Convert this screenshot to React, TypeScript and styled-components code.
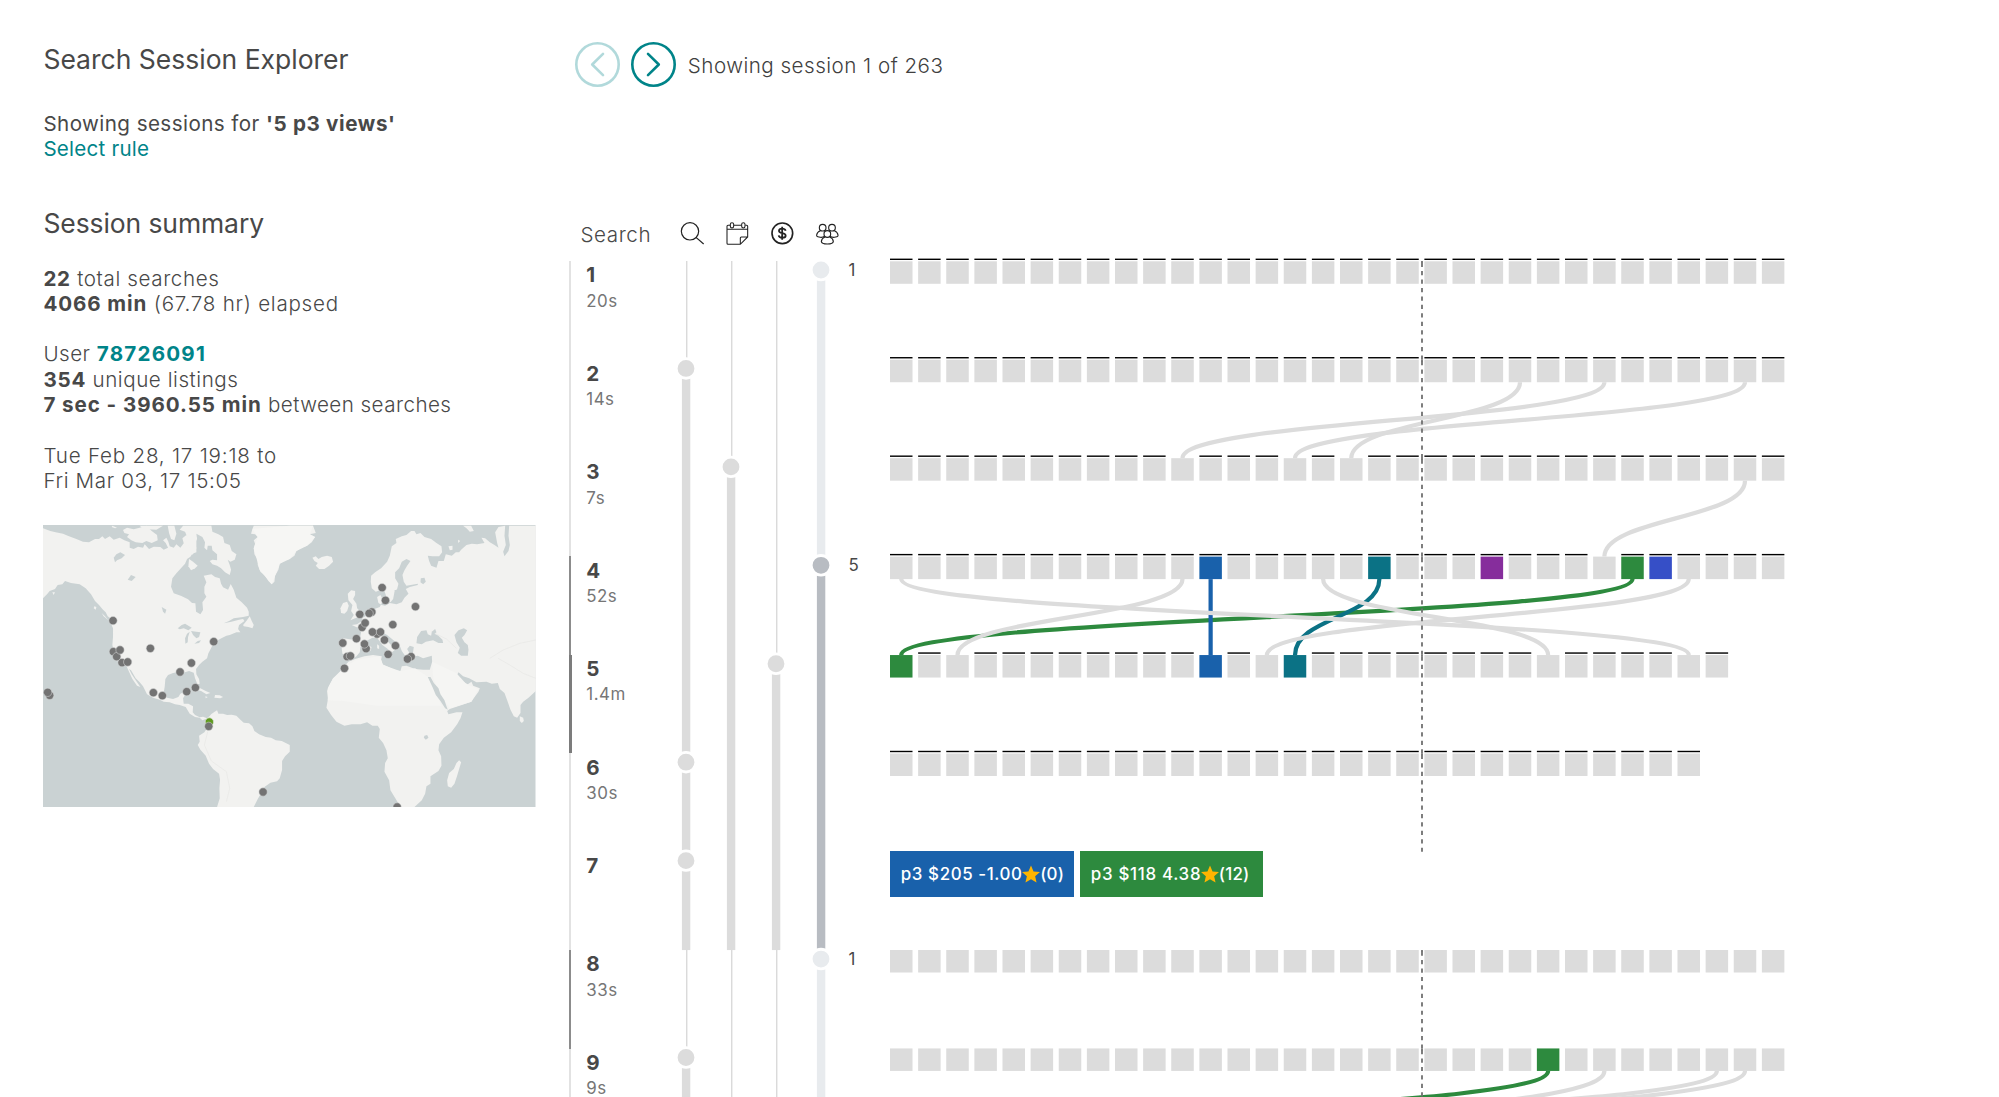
import React from 'react';
import styled, { createGlobalStyle } from 'styled-components';

const UNIT = 1.40625;
const ROW = 70 * UNIT;
const CELL = 16 * UNIT;
const STEP = 20 * UNIT;
const GREY = '#dcdcdc';
const TEAL = '#008489';
const BLUE = '#1961ab';
const GREEN = '#2d8a3e';
const CYAN = '#0b7285';
const PURPLE = '#862d9c';
const INDIGO = '#364fc7';

const GlobalStyle = createGlobalStyle`
  body {
    margin: 0;
    background: #fff;
    color: #484848;
    font-family: Inter, 'Liberation Sans', sans-serif;
  }
`;

const Page = styled.div`
  display: grid;
  grid-template-columns: 569px 1fr;
  height: 1097px;
  overflow: hidden;
`;

const Sidebar = styled.aside`
  padding: 42.6px 0 0 43.4px;
`;

const Heading = styled.h1<{ $spacing?: number }>`
  margin: 0;
  font-size: 26.5px;
  font-weight: 400;
  line-height: 32px;
  letter-spacing: ${(p) => p.$spacing ?? 0}px;
`;

const Block = styled.div<{ $top: number }>`
  margin-top: ${(p) => p.$top}px;
  font-size: 20.6px;
  line-height: 25.3125px;
  white-space: pre;
`;

const Line = styled.div`
  height: 25.3125px;
`;

const Text = styled.span<{ $spacing: number; $light?: boolean }>`
  font-weight: ${(p) => (p.$light ? 340 : 400)};
  letter-spacing: ${(p) => p.$spacing}px;
`;

const Strong = styled.strong<{ $spacing: number; $accent?: boolean }>`
  font-weight: 700;
  letter-spacing: ${(p) => p.$spacing}px;
  color: ${(p) => (p.$accent ? TEAL : 'inherit')};
`;

const RuleLink = styled.a`
  color: ${TEAL};
  letter-spacing: 0.22px;
`;

const MapFrame = styled.svg`
  display: block;
  width: 492.5px;
  height: 282px;
  margin-top: 32px;
`;

const Main = styled.main`
  display: flex;
  flex-direction: column;
  padding-top: 42px;
  min-width: 0;
`;

const Nav = styled.nav`
  display: flex;
  align-items: center;
  height: 45px;
  padding-left: 6px;
`;

const RoundButton = styled.button<{ $faded?: boolean }>`
  display: block;
  width: 45px;
  height: 45px;
  margin-right: 11.4px;
  padding: 0;
  border: 0;
  background: none;
  color: ${TEAL};
  opacity: ${(p) => (p.$faded ? 0.3 : 1)};
`;

const NavText = styled.span`
  padding-top: 2px;
  color: #404040;
  font-size: 20.6px;
  font-weight: 340;
  letter-spacing: 0.48px;
`;

const Header = styled.div`
  display: flex;
  gap: 20px;
  height: 25px;
  margin-top: 134px;
  padding-left: 11.4px;
`;

const HeaderLabel = styled.span`
  width: 80px;
  font-size: 20.6px;
  font-weight: 340;
  line-height: 28px;
  letter-spacing: 0.6px;
`;

const HeaderIcon = styled.svg`
  width: 25px;
  height: 25px;
  flex: none;
  fill: none;
  stroke: #222;
`;

const Body = styled.div`
  display: flex;
  margin-top: 12px;
`;

const SearchList = styled.div`
  width: 103px;
  padding-top: 3px;
`;

const SearchRow = styled.div<{ $bar: number; $color: string }>`
  box-sizing: border-box;
  height: ${ROW}px;
  padding: 1.4px 0 0 17.3px;
  background: linear-gradient(${(p) => p.$color}, ${(p) => p.$color}) no-repeat 0 0 / ${(p) => p.$bar}px 100%;
`;

const SearchNumber = styled.div`
  font-size: 20.6px;
  font-weight: 700;
  line-height: 25.3px;
`;

const SearchTime = styled.div`
  color: #767676;
  font-size: 16.9px;
  line-height: 26px;
  letter-spacing: 0.5px;
`;

const Tracks = styled.svg`
  width: 165px;
  height: 840px;
  flex: none;
`;

const GroupList = styled.div`
  width: 41.4px;
  padding: 2.6px 0 0 11.6px;
`;

const GroupCount = styled.div<{ $rows: number }>`
  height: ${(p) => p.$rows * ROW}px;
  font-size: 16.9px;
  line-height: 18px;
`;

const Chart = styled.div`
  display: flex;
  flex-direction: column;
`;

const Plot = styled.svg<{ $height: number; $top?: number }>`
  display: block;
  width: 920px;
  height: ${(p) => p.$height}px;
  margin-top: ${(p) => p.$top ?? 0}px;
  overflow: visible;
`;

const TagRow = styled.div`
  display: flex;
  gap: 6px;
  height: 46px;
`;

const Tag = styled.div<{ $bg: string; $width: number; $spacing: number }>`
  box-sizing: border-box;
  display: flex;
  align-items: center;
  width: ${(p) => p.$width}px;
  height: 46px;
  padding-left: 10.8px;
  background: ${(p) => p.$bg};
  color: #fff;
  font-size: 16.9px;
  font-weight: 500;
  letter-spacing: ${(p) => p.$spacing}px;
  white-space: pre;
`;

const StarIcon = styled.svg`
  width: 18px;
  height: 18px;
  margin-left: -0.4px;
  fill: #ffb400;
`;

const Reviews = styled.span`
  letter-spacing: 0.2px;
`;

const poly = (points: string) => {
  const p = points.trim().split(/\s+/);
  return `M${p.join('L')}Z`;
};

const AMERICAS = [
  '40,40 62,48 78,52 100,56 116,63 140,72 160,80 178,82 196,72 208,72 218,64 226,72 240,64 252,74 270,68 284,76 300,82 300,98 312,102 325,95 340,98 345,88 358,102 372,95 392,96 402,104 415,98 408,84 400,76 410,68 416,80 420,94 432,98 440,88 452,98 462,85 458,70 470,60 478,70 500,66 500,112 488,116 482,125 472,132 466,146 455,158 440,175 428,190 424,215 432,235 455,243 475,253 487,264 497,265 499,290 512,298 520,285 518,262 530,245 524,235 524,215 530,202 522,182 545,178 556,186 570,190 574,206 580,217 595,224 603,207 612,224 620,248 636,262 652,278 657,290 657,302 640,306 612,310 598,318 582,325 605,320 628,314 640,312 644,318 628,330 625,342 632,352 620,352 600,360 590,362 575,370 560,378 550,386 544,400 536,415 532,430 518,440 508,450 499,462 500,478 508,492 510,506 503,508 496,490 492,473 478,468 458,474 448,470 430,474 415,480 407,492 405,515 402,532 412,548 430,552 446,546 452,536 464,530 466,540 460,550 462,566 476,566 490,574 489,592 496,600 510,607 520,605 532,610 540,603 545,597 555,590 562,586 566,596 580,596 592,600 606,599 620,602 632,614 642,623 658,625 668,634 674,648 688,658 708,666 724,668 738,676 756,678 780,690 780,710 766,724 757,738 757,765 750,790 742,799 722,803 705,815 696,832 684,852 672,876 562,876 570,850 569,820 571,794 568,776 550,762 538,746 528,722 512,704 504,690 510,680 508,662 524,652 532,640 536,622 528,612 518,616 510,608 496,606 480,596 468,576 450,570 436,568 420,562 402,560 390,554 370,548 352,538 340,514 330,502 318,490 304,466 298,462 306,478 318,496 332,516 322,512 308,492 298,470 290,452 275,444 264,430 252,408 248,390 250,365 250,340 244,326 248,314 234,304 228,292 220,284 208,270 196,258 184,238 168,220 150,208 124,204 106,198 98,208 84,210 76,222 60,228 52,238 40,250',
  '248,32 262,38 256,40 246,36',
  '280,45 292,38 312,43 330,38 350,32 366,48 382,60 384,76 366,84 350,78 338,84 318,82 305,76 292,66 298,58 284,54',
  '330,32 400,32 380,44 340,42',
  '414,32 434,32 440,56 434,76 424,72 418,54',
  '460,32 545,32 548,50 566,58 580,66 584,84 600,90 606,108 620,118 615,134 602,140 594,134 600,150 604,164 600,180 586,172 574,160 562,152 548,148 540,138 548,134 562,136 562,118 548,106 546,92 534,92 532,106 524,98 526,82 518,66 500,56 502,72 496,84 500,100 488,120 482,100 470,84 474,70 466,50 450,44',
  '478,132 490,140 504,152 496,160 484,166 476,154',
  '672,32 668,42 664,56 676,58 684,66 672,76 676,86 672,100 674,118 684,134 684,150 692,170 706,182 716,198 726,208 734,200 736,182 746,164 750,146 766,136 780,132 794,122 800,108 814,98 832,92 846,82 856,66 840,58 858,54 850,32',
  '486,512 500,518 512,520 528,528 542,534 530,538 514,528 500,524 484,522',
  '556,540 570,541 580,546 572,550 554,548',
  '527,544 534,546 528,550',
  '640,330 650,318 660,304 666,318 672,330 668,340 656,336 642,334',
  '194,274 200,276 198,284 192,280',
  '216,294 226,304 238,318 246,324 236,316 222,304',
  '68,232 76,232 72,240',
];

const LAKES = [
  '252,128 260,118 272,112 286,120 276,130 262,136 256,142',
  '294,194 304,180 318,186 306,198',
  '396,276 410,284 406,296 400,290',
  '444,340 456,330 466,326 486,338 476,346 462,340 450,343',
  '467,386 466,370 472,356 480,350 475,366 474,382',
  '484,348 500,350 512,352 508,366 500,370 490,360',
  '494,386 504,378 514,376 508,384',
];

const OLD_WORLD = [
  '738,32 658,32 656,62 660,90 656,108 644,124 640,110 648,90 644,62 646,32 626,36 616,52 622,84 626,98 614,90 600,82 586,70 575,68 584,84 562,88 546,86 530,90 514,104 508,112 498,112 486,122 468,118 462,138 446,138 440,158 424,152 418,138 414,122 428,124 448,124 457,112 455,94 440,84 424,72 404,66 392,54 380,58 374,48 364,48 350,60 336,64 318,72 320,84 306,94 300,122 292,140 274,160 256,172 244,182 243,200 246,220 258,230 270,226 276,212 284,228 292,252 302,262 310,252 314,232 322,222 326,206 316,190 316,172 328,160 336,140 350,132 362,138 352,152 344,166 338,180 342,200 350,212 384,206 384,210 360,216 348,222 356,236 344,248 336,262 320,268 300,264 286,272 276,270 266,264 262,246 272,240 280,256 270,276 254,282 240,288 230,302 218,308 216,318 202,328 186,330 204,338 214,352 210,372 190,374 160,370 156,384 156,402 158,416 172,424 182,436 200,424 210,412 212,396 230,378 248,368 262,368 278,390 294,402 302,412 294,422 306,412 316,404 306,392 290,376 280,362 276,352 292,360 314,378 330,392 336,408 346,422 360,416 352,402 360,392 372,396 370,410 366,426 384,422 400,430 426,422 427,440 420,464 400,464 376,462 350,452 336,454 332,468 316,466 296,456 278,448 274,434 276,424 250,420 224,424 196,432 176,440 162,456 150,478 130,490 118,512 112,528 115,550 110,578 124,600 140,620 164,632 186,628 212,628 232,622 248,632 264,632 270,642 267,668 280,684 290,706 294,730 286,744 284,770 298,796 302,826 318,852 332,876 374,876 396,856 406,836 410,814 422,806 422,784 446,768 455,752 454,724 446,706 448,688 462,668 484,652 502,628 512,610 518,592 500,592 476,598 472,588 480,582 516,570 544,560 566,530 570,520 550,512 545,500 534,508 516,498 502,480 506,472 520,484 538,490 560,502 590,500 606,506 624,504 630,522 644,534 652,556 662,584 672,604 682,608 692,594 692,570 700,560 716,548 738,528',
  '174,236 184,226 196,228 196,240 190,252 200,266 202,280 214,292 210,306 196,310 182,316 192,300 184,288 188,270 176,256',
  '152,280 160,264 172,260 177,272 172,288 164,296 154,294',
  '68,128 78,124 86,132 96,126 112,122 126,126 130,140 118,152 104,162 88,162 78,152 84,144 74,138',
  '500,744 508,736 514,742 508,762 502,782 494,806 484,818 474,814 472,796 478,774 492,762',
  '690,604 700,608 702,618 696,624 690,618',
  '520,32 544,32 552,48 540,50 530,40',
  '476,94 488,92 488,104 480,106',
  '505,74 511,78 505,84',
  '240,394 245,396 243,408 239,404',
  '262,388 268,392 268,402 262,400',
];

const SEAS = [
  '380,385 382,366 394,348 410,346 414,358 424,362 426,350 436,342 440,352 434,356 446,362 458,374 460,384 446,384 430,376 408,380 396,388',
  '494,360 506,346 522,340 532,346 524,360 516,368 524,382 534,390 536,404 534,422 514,422 504,414 510,398 500,382',
  '414,486 422,486 432,504 446,520 452,538 464,556 470,574 474,584 466,580 452,558 438,540 428,516',
  '393,190 404,188 408,200 400,208 392,202',
  '404,662 412,660 416,668 408,674 402,668',
  '314,226 322,224 322,236 316,240',
];

const PINS: [number, number][] = [
  [250, 317], [362, 400], [552, 380], [485, 444], [451, 471], [497, 518], [471, 530], [398, 542], [371, 533],
  [251, 410], [261, 425], [271, 405], [277, 443], [294, 441], [60, 541], [54, 532], [537, 634], [700, 831],
  [1057, 218], [1067, 256], [1157, 275], [1026, 291], [1018, 295], [990, 298], [997, 337], [1006, 324], [1089, 329],
  [1042, 357], [1028, 351], [1052, 351], [980, 371], [1064, 375], [939, 384], [1009, 401], [1004, 387], [1097, 392],
  [1075, 418], [952, 425], [962, 423], [1144, 425], [1133, 432], [944, 460], [1102, 876],
];

function WorldMap() {
  return (
    <MapFrame viewBox="40 30 1477 846" preserveAspectRatio="none">
      <rect x="40" y="30" width="1477" height="846" fill="#cad2d3" />
      <g fill="#f2f2f0">{AMERICAS.map((d) => <path key={d} d={poly(d)} />)}</g>
      <g fill="#cad2d3">{LAKES.map((d) => <path key={d} d={poly(d)} />)}</g>
      <g transform="translate(780 0)">
        <g fill="#f2f2f0">{OLD_WORLD.map((d) => <path key={d} d={poly(d)} />)}</g>
        <path d="M162 458L200 434L270 424L280 450L330 468L376 460L415 486L440 535L455 572L380 572L260 572L160 558L114 556L114 520L130 490Z" fill="#f5f5f3" />
        <path d="M427 440L500 475L530 508L566 522L545 560L480 580L455 545L430 490Z" fill="#f5f5f3" />
        <g fill="none" stroke="#e9e9e7" strokeWidth="2.5">
          <path d="M600 430L640 405L690 385L738 375M625 430L660 450L700 475L738 490M425 350L470 372L500 400" />
        </g>
        <g fill="#cad2d3">{SEAS.map((d) => <path key={d} d={poly(d)} />)}</g>
      </g>
      <path d="M780 32L850 32L840 58L856 66L832 92L800 108L780 132L750 146L726 208L690 165L672 100L684 66L668 42Z" fill="#f6f6f4" />
      <path d="M534 650L524 690L545 738L590 770L600 820L590 860" fill="none" stroke="#e9e9e7" strokeWidth="2.5" />
      <circle cx="539" cy="621" r="12.500" fill="#5f9a1f" stroke="#dfe3e0" strokeWidth="2" />
      {PINS.map(([x, y]) => (
        <circle key={`${x}-${y}`} cx={x} cy={y} r="12.5" fill="#737373" stroke="#d8dad9" strokeOpacity="0.8" strokeWidth="2" />
      ))}
    </MapFrame>
  );
}

function Arrow({ back }: { back?: boolean }) {
  return (
    <svg width="45" height="45" viewBox="0 0 45 45" fill="none" stroke="currentColor" strokeWidth="2.6">
      <circle cx="22.5" cy="22.5" r="21.2" />
      <path d={back ? 'M28 11.8L17.2 22.5L28 33.2' : 'M17 11.8L27.8 22.5L17 33.2'} strokeLinecap="round" strokeLinejoin="round" />
    </svg>
  );
}

function HeaderIcons() {
  return (
    <>
      <HeaderIcon viewBox="362 33 75 75" strokeWidth="3.6">
        <circle cx="392" cy="64" r="26" />
        <path d="M410 82L433 102" />
      </HeaderIcon>
      <HeaderIcon viewBox="497 33 75 75" strokeWidth="3.2">
        <path d="M512 46H506Q503 46 503 49V100Q503 103 506 103H543L565 81V49Q565 46 562 46H558M524 46H546M503 58H565M543 103V84Q543 81 546 81H565" />
        <rect x="513" y="38" width="10" height="16" rx="5" />
        <rect x="547" y="38" width="10" height="16" rx="5" />
      </HeaderIcon>
      <HeaderIcon viewBox="632 33 75 75" strokeWidth="5" stroke="#000">
        <circle cx="669" cy="70" r="31" />
        <path d="M679 62Q677 56 668.500 56Q659 56 659 62.500Q659 68 668.500 69.500Q679 71 679 77Q679 83 669 83Q659 83 658 76M668.500 50V89" strokeWidth="5.400" />
      </HeaderIcon>
      <HeaderIcon viewBox="767 33 75 75" strokeWidth="3.4">
        <circle cx="790" cy="53" r="10" />
        <circle cx="818" cy="53" r="10" />
        <path d="M783 62Q773 66 772 75Q771 80 779 81Q788 84 796 79M825 62Q835 66 836 75Q837 80 829 81Q820 84 812 79" />
        <circle cx="804" cy="72" r="10" fill="#fff" />
        <path d="M797 81Q787 85 786 94Q787 102 804 102Q821 102 822 94Q821 85 811 81" />
      </HeaderIcon>
    </>
  );
}

const SEARCHES: { time?: string; bar?: number; color?: string }[] = [
  { time: '20s' }, { time: '14s' }, { time: '7s' },
  { time: '52s', color: '#8c8c8c' }, { time: '1.4m', bar: 3, color: '#7c7c7c' },
  { time: '30s' }, {}, { time: '33s', color: '#8c8c8c' }, { time: '9s' },
];

const PALE = '#e8ebee';
const SLATE = '#b8bcc2';

const BARS: { col: number; from: number; to: number; color: string }[] = [
  { col: 0, from: 1.09, to: 7, color: GREY },
  { col: 0, from: 8.09, to: 9, color: GREY },
  { col: 1, from: 2.09, to: 7, color: GREY },
  { col: 2, from: 4.09, to: 7, color: GREY },
  { col: 3, from: 0.09, to: 3.09, color: PALE },
  { col: 3, from: 3.09, to: 7.09, color: SLATE },
  { col: 3, from: 7.09, to: 9, color: PALE },
];

const DOTS: [number, number, string][] = [
  [0, 1, GREY], [0, 5, GREY], [0, 6, GREY], [0, 8, GREY],
  [1, 2, GREY], [2, 4, GREY],
  [3, 0, PALE], [3, 3, SLATE], [3, 7, PALE],
];

function TrackColumns() {
  const x = (col: number) => 14 + col * 45;
  return (
    <Tracks>
      <g transform="translate(0 3)">
        {[0, 1, 2].map((col) => (
          <rect key={col} x={x(col) + 0.1} y="0" width="1.3" height="840" fill="#d6d6d6" />
        ))}
        {BARS.map((b) => (
          <rect key={`${b.col}-${b.from}`} x={x(b.col) - 4.1} y={b.from * ROW} width="8.4"
            height={(b.to - b.from) * ROW} fill={b.color} />
        ))}
        {DOTS.map(([col, row, color]) => (
          <circle key={`${col}-${row}`} cx={x(col)} cy={row * ROW + 9} r="9.8" fill={color} stroke="#fff" strokeWidth="2.8" />
        ))}
      </g>
    </Tracks>
  );
}

type Row = { count: number; fills?: Record<number, string>; open?: number[]; plain?: boolean };

const UPPER: Row[] = [
  { count: 32 },
  { count: 32 },
  { count: 32, open: [10, 14, 16] },
  { count: 32, open: [25], fills: { 11: BLUE, 17: CYAN, 21: PURPLE, 26: GREEN, 27: INDIGO } },
  { count: 30, open: [0, 2, 11, 13, 14, 23, 28], fills: { 0: GREEN, 11: BLUE, 14: CYAN } },
  { count: 29 },
];

const LOWER: Row[] = [
  { count: 32, plain: true },
  { count: 32, plain: true, fills: { 23: GREEN } },
];

type Link = [row: number, from: number, to: number, color?: string];

const UPPER_LINKS: Link[] = [
  [1, 25, 10], [1, 30, 14], [1, 22, 16],
  [2, 30, 25],
  [3, 26, 0, GREEN], [3, 11, 11, BLUE], [3, 17, 14, CYAN],
  [3, 0, 28], [3, 10, 2], [3, 15, 23], [3, 28, 13],
];

const LOWER_LINKS: Link[] = [
  [1, 23, 3, GREEN], [1, 25, 13], [1, 29, 9], [1, 30, 12],
];

function Rows({ rows, links, top }: { rows: Row[]; links: Link[]; top: number }) {
  return (
    <>
      {links.map(([row, from, to, color]) => {
        const x0 = from * STEP + CELL / 2;
        const x1 = to * STEP + CELL / 2;
        const y0 = top + row * ROW + CELL;
        const y1 = top + (row + 1) * ROW;
        const mid = (y0 + y1) / 2;
        return (
          <path key={`${row}-${from}`} d={`M${x0} ${y0}C${x0} ${mid} ${x1} ${mid} ${x1} ${y1}`}
            fill="none" stroke={color ?? GREY} strokeWidth={3 * UNIT} />
        );
      })}
      {rows.map((row, r) => {
        const y = top + r * ROW;
        return (
          <g key={r}>
            {Array.from({ length: row.count }, (_, i) => (
              <g key={i}>
                <rect x={i * STEP} y={y} width={CELL} height={CELL} fill={row.fills?.[i] ?? GREY} />
                {!row.plain && !row.open?.includes(i) && (
                  <rect x={i * STEP} y={y - 2.7} width={CELL} height={UNIT} fill="#000" />
                )}
              </g>
            ))}
          </g>
        );
      })}
    </>
  );
}

function FoldLine({ rows, top }: { rows: number; top: number }) {
  return (
    <g stroke="#707070" strokeWidth="1.8">
      {Array.from({ length: rows }, (_, r) => {
        const y = top + r * ROW;
        return (
          <g key={r}>
            <path d={`M532 ${y}V${y + 2}`} />
            <path d={`M532 ${y + 1.56}V${y + ROW}`} strokeDasharray="4.22 4.22" />
          </g>
        );
      })}
    </g>
  );
}

function Star() {
  return (
    <StarIcon viewBox="0 0 24 24">
      <path d="M12 0.600L15.400 8.500L24 9.300L17.500 15L19.400 23.400L12 19L4.600 23.400L6.500 15L0 9.300L8.600 8.500Z" />
    </StarIcon>
  );
}

export default function App() {
  return (
    <Page>
      <GlobalStyle />
      <Sidebar>
        <Heading>Search Session Explorer</Heading>
        <Block $top={36.4}>
          <Line><Text $spacing={0.43}>Showing sessions for </Text><Strong $spacing={0.65}>'5 p3 views'</Strong></Line>
          <Line><RuleLink>Select rule</RuleLink></Line>
        </Block>
        <Block $top={44.9}>
          <Heading as="h2" $spacing={-0.1}>Session summary</Heading>
        </Block>
        <Block $top={27}>
          <Line><Strong $spacing={0.7}>22</Strong><Text $light $spacing={0.62}> total searches</Text></Line>
          <Line><Strong $spacing={0.9}>4066 min</Strong><Text $light $spacing={0.75}> (67.78 hr) elapsed</Text></Line>
          <Line />
          <Line><Text $light $spacing={0.5}>User </Text><Strong $accent $spacing={1.2}>78726091</Strong></Line>
          <Line><Strong $spacing={0.8}>354</Strong><Text $light $spacing={0.55}> unique listings</Text></Line>
          <Line><Strong $spacing={0.93}>7 sec - 3960.55 min</Strong><Text $light $spacing={0.44}> between searches</Text></Line>
          <Line />
          <Line><Text $light $spacing={0.78}>Tue Feb 28, 17 19:18 to</Text></Line>
          <Line><Text $light $spacing={0.64}>Fri Mar 03, 17 15:05</Text></Line>
        </Block>
        <WorldMap />
      </Sidebar>
      <Main>
        <Nav>
          <RoundButton $faded><Arrow back /></RoundButton>
          <RoundButton><Arrow /></RoundButton>
          <NavText>Showing session 1 of 263</NavText>
        </Nav>
        <Header>
          <HeaderLabel>Search</HeaderLabel>
          <HeaderIcons />
        </Header>
        <Body>
          <SearchList>
            {SEARCHES.map((s, i) => (
              <SearchRow key={i} $bar={s.bar ?? 2} $color={s.color ?? '#e2e2e2'}>
                <SearchNumber>{i + 1}</SearchNumber>
                {s.time && <SearchTime>{s.time}</SearchTime>}
              </SearchRow>
            ))}
          </SearchList>
          <TrackColumns />
          <GroupList>
            <GroupCount $rows={3}>1</GroupCount>
            <GroupCount $rows={4}>5</GroupCount>
            <GroupCount $rows={1}>1</GroupCount>
          </GroupList>
          <Chart>
            <Plot $height={593}>
              <Rows rows={UPPER} links={UPPER_LINKS} top={3.3} />
              <FoldLine rows={6} top={3.1} />
            </Plot>
            <TagRow>
              <Tag $bg={BLUE} $width={184} $spacing={0.6}>p3 $205 -1.00<Star /><Reviews>(0)</Reviews></Tag>
              <Tag $bg={GREEN} $width={182.6} $spacing={0.7}>p3 $118 4.38<Star /><Reviews>(12)</Reviews></Tag>
            </TagRow>
            <Plot $height={147} $top={53}>
              <Rows rows={LOWER} links={LOWER_LINKS} top={0} />
              <FoldLine rows={2} top={0} />
            </Plot>
          </Chart>
        </Body>
      </Main>
    </Page>
  );
}
